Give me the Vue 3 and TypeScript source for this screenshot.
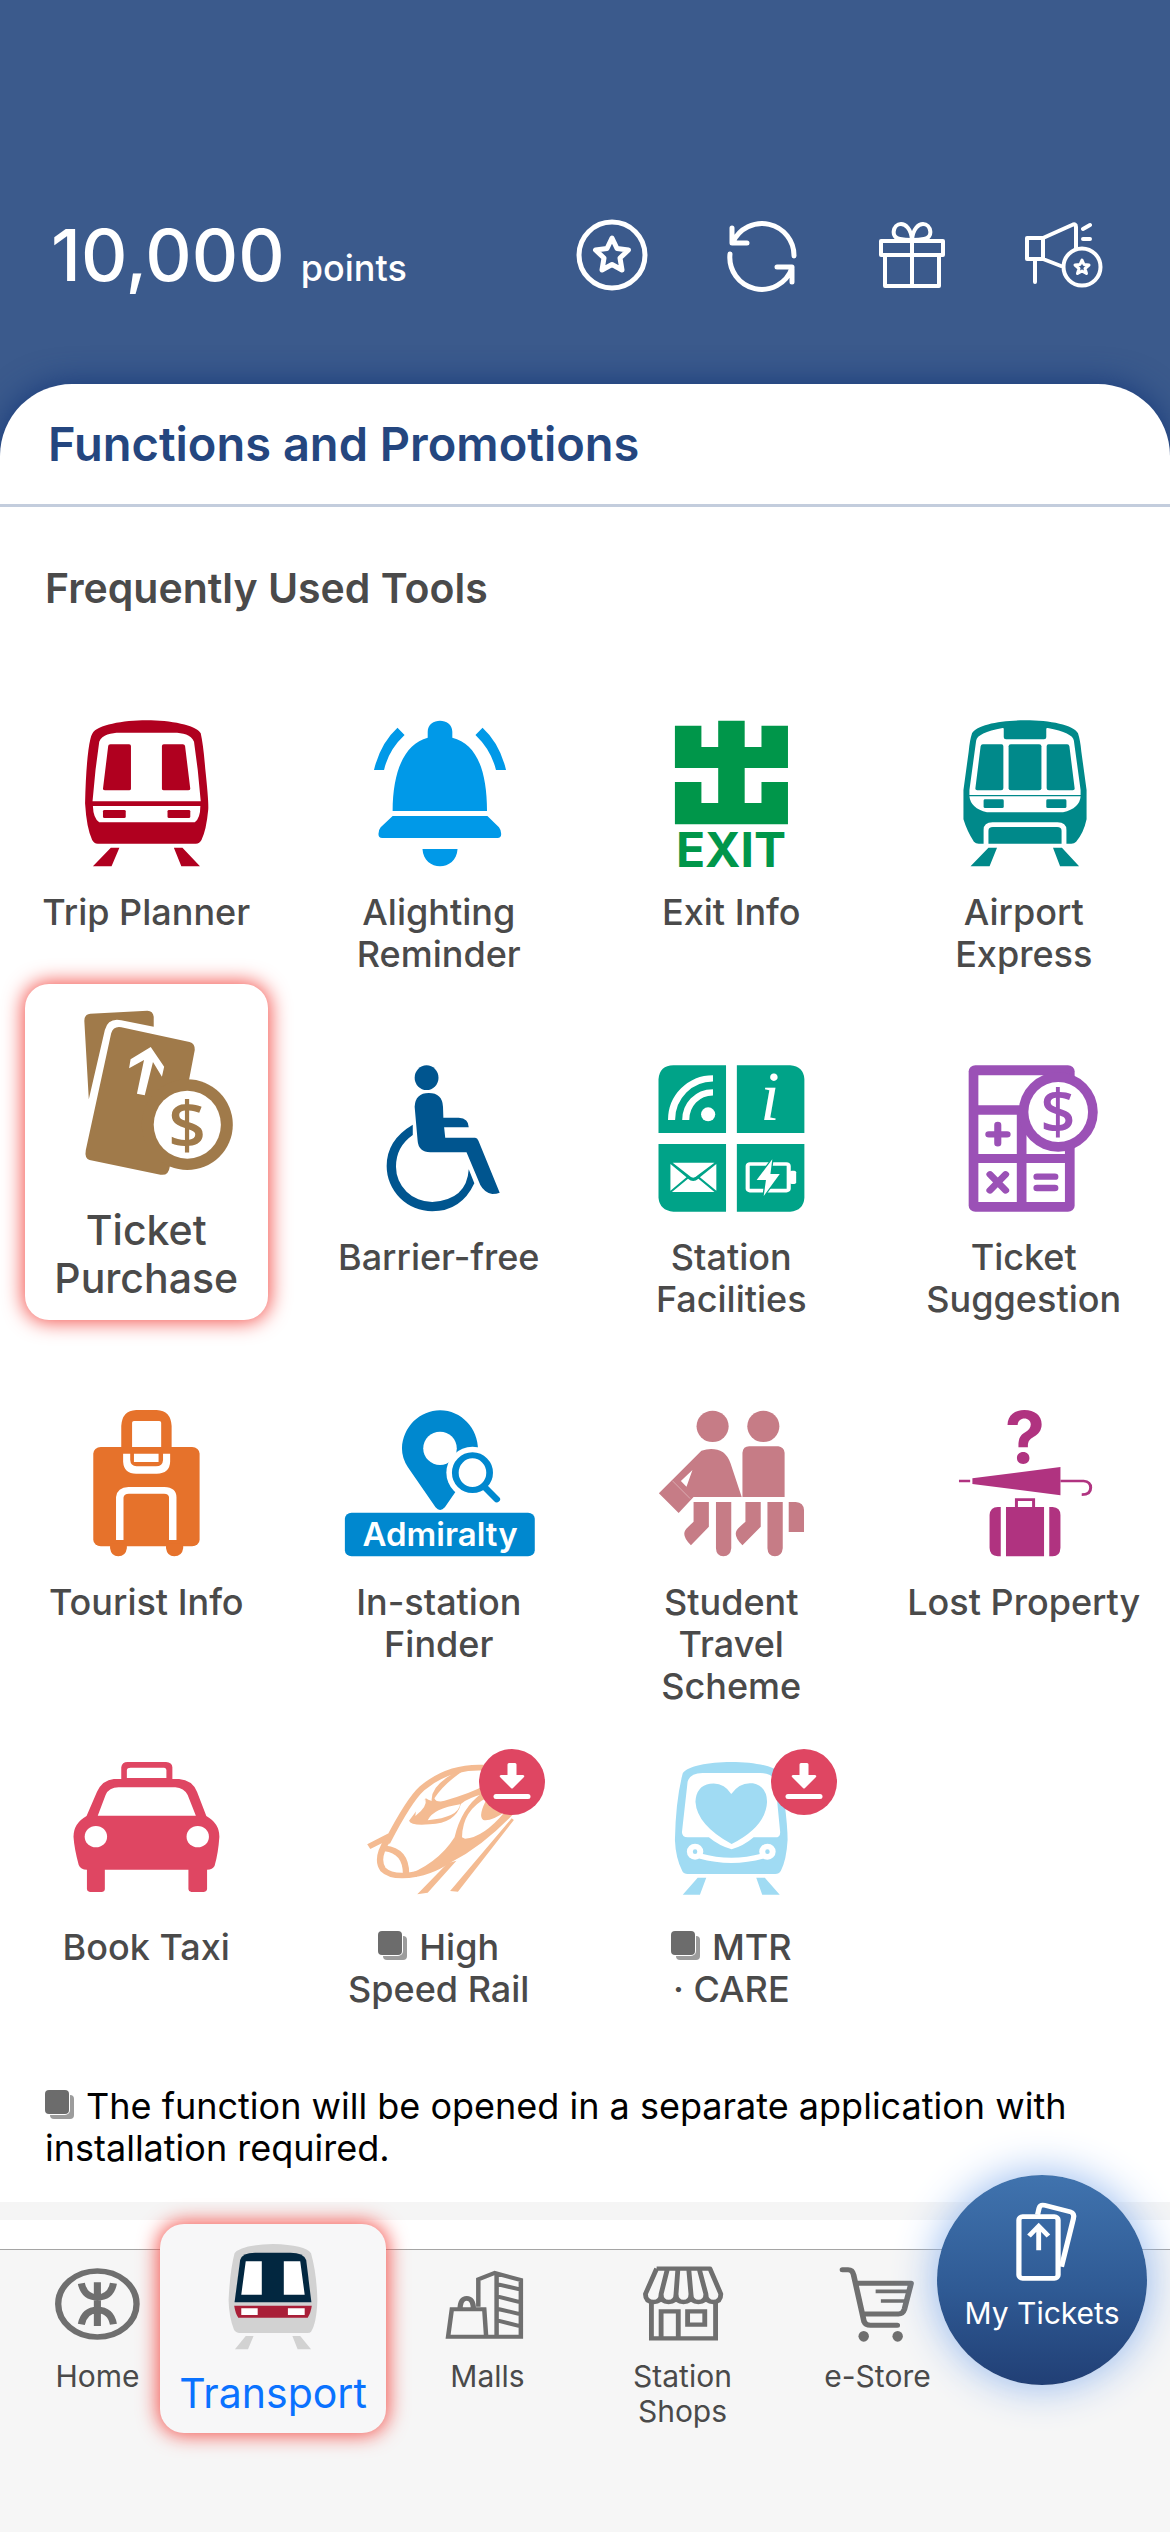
<script setup lang="ts">
interface Tool {
  icon: string
  label: string
  separateApp?: boolean
  highlighted?: boolean
}

interface Tab {
  icon: string
  label: string
  active?: boolean
}

// Icon artwork is authored on a 784-unit-wide artboard per column and mapped to a 292x146 box.
const art = (tx: number, ty: number, body: string): string =>
  `<g transform="matrix(.3731 0 0 .3333 ${tx} ${ty})">${body}</g>`

const downloadBadge = `
  <circle cx="219" cy="27" r="33" fill="#df4662"/>
  <path fill="#fff" d="M214.500 9.500Q214.500 8 216 8H222Q223.500 8 223.500 9.500V20H230Q232 20.500 231 22L220 33Q219 34 218 33L207 22Q206 20.500 208 20H214.500Z"/>
  <path stroke="#fff" stroke-width="5" stroke-linecap="round" d="M203 41.500H235"/>`

const toolIcons: Record<string, string> = {
  trip: art(0, -30, `<g fill="#b0001f">
    <path fill-rule="evenodd" d="M248 130C260 105 330 91 393 91S526 105 538 130Q545 165 550 235Q560 340 558 360Q553 420 540 450Q535 461 525 461H262Q252 461 247 450Q232 415 228 340Q230 240 237 180Q242 140 248 130ZM266 155C273 133 300 128 320 128H466C490 128 512 133 520 155L530 240L538 334H248L256 240ZM249 348H537Q537 385 522 397H266Q250 385 249 348Z"/>
    <path d="M296 163H346Q351 163 351 168V296Q351 301 346 301H282Q276 301 276 296L290 168Q290 163 296 163ZM490 163H439Q434 163 434 168V296Q434 301 439 301H504Q510 301 510 296L496 168Q495 163 490 163Z"/>
    <rect x="276" y="360" width="61" height="24" rx="4"/><rect x="449" y="360" width="61" height="24" rx="4"/>
    <path d="M297 473H320L299 529H249ZM466 473H489L536 529H486Z"/></g>`),
  bell: art(-292.5, -30, `<path fill="#0099e8" d="M1145 143V125C1145 81 1211 81 1211 125V143C1275 160 1304 240 1304 363H1051C1051 240 1085 160 1145 143ZM1051 378H1305L1336 412Q1342 420 1342 432Q1342 444 1332 444H1023Q1013 444 1013 432Q1013 420 1019 412ZM1131 477H1225C1222 546 1134 546 1131 477ZM1064 113L1083 135Q1040 180 1028 240H1001Q1018 160 1064 113ZM1292 113L1273 135Q1315 180 1328 240H1355Q1338 160 1292 113Z"/>`),
  exit: art(0, -30, `<path fill="#00964a" d="M241 107H312V171H357V92H428V171H473V107H544V234H428V339H473V276H544V403H241V276H312V339H357V234H241Z"/>`) +
    `<text x="146" y="147" text-anchor="middle" font-size="48" font-weight="700" fill="#00964a">EXIT</text>`,
  airport: art(-292.5, -30, `<g fill="#00898a">
    <path fill-rule="evenodd" d="M1036 130C1048 105 1110 91 1178 91S1308 105 1320 130Q1326 150 1329 185L1343 300V388Q1335 430 1315 455Q1310 461 1302 461H1289V420Q1289 397 1265 397H1091Q1067 397 1067 420V461H1054Q1046 461 1041 455Q1023 425 1013 388V300L1027 185Q1030 150 1036 130ZM1047 152Q1050 128 1118 114Q1121 113 1121 117V142Q1121 148 1127 148H1229Q1235 148 1235 142V117Q1235 113 1239 114Q1306 128 1309 152L1327 300V315H1029V300ZM1029 319H1327Q1325 355 1280 367H1076Q1032 355 1029 319Z"/>
    <path d="M1065 163H1115Q1120 163 1120 169V295Q1120 301 1114 301H1050Q1044 301 1045 295L1059 169Q1060 163 1065 163ZM1291 163H1241Q1236 163 1236 169V295Q1236 301 1242 301H1306Q1312 301 1311 295L1297 169Q1296 163 1291 163Z"/>
    <rect x="1134" y="163" width="88" height="138" rx="6"/>
    <rect x="1067" y="328" width="54" height="26" rx="4"/><rect x="1235" y="328" width="54" height="26" rx="4"/>
    <path d="M1080 461V422Q1080 411 1092 411H1264Q1276 411 1276 422V461ZM1080 473H1103L1083 529H1032ZM1253 473H1277L1323 529H1272Z"/></g>`),
  purchase: art(-25, -38, `<g fill="#a07a4a">
    <path d="M226 152Q226 133 242 131L395 122Q410 122 412 140V170L325 151Q290 143 281 180L238 388Z"/>
    <path d="M298 190Q304 168 325 172L508 216Q523 221 522 240L507 328L455 590Q452 618 430 614L240 570Q226 565 230 540Z"/>
    <ellipse cx="502" cy="464" rx="122" ry="136"/></g>
    <ellipse cx="502" cy="464" rx="90" ry="102" fill="#fff"/>
    <path fill="#fff" d="M404 231L440 290L434 320L410 276L388 376L367 371L386 270L346 295L350 268Z"/>`) +
    `<text x="162" y="140" text-anchor="middle" font-family="Open Sans, Noto Sans, sans-serif" font-size="66" font-weight="600" fill="#a07a4a">$</text>`,
  barrier: art(-292.5, -95, `<g fill="#00558f"><ellipse cx="1142" cy="323" rx="32" ry="37"/>
    <path d="M1110 410Q1112 369 1148 369Q1184 369 1186 410L1187 443H1228Q1255 445 1255 472H1189L1192 503H1272Q1278 503 1281 512L1338 668Q1330 672 1318 672Q1297 668 1286 645L1249 547H1152Q1120 545 1118 512Z"/>
    <path d="M1105 464V495Q1060 530 1060 590A97 106 0 0 0 1157 696Q1250 690 1255 598L1270 640Q1235 724 1157 724A122 136 0 0 1 1035 588Q1035 510 1105 464Z"/></g>`),
  facilities: art(0, -35, `<path fill="#00a388" d="M197 309V148Q200 106 237 106H378V309ZM407 106H550Q586 110 588 147V309H407ZM197 342H378V545H237Q200 541 197 503ZM407 342H588V503Q586 541 550 545H407Z"/>
    <g fill="none" stroke="#fff" stroke-width="19"><path d="M232 270C232 200 282 145 343 145M270 270C270 225 300 187 343 187"/><rect x="436" y="402" width="110" height="80" rx="6" stroke-width="11"/></g>
    <g fill="#fff"><ellipse cx="330" cy="253" rx="19" ry="21"/><path d="M235 398H347L302 436Q290 450 278 436ZM229 402L272 442L229 482ZM352 402L308 442L352 482ZM233 486L276 446Q290 460 304 446L347 486Z"/><rect x="549" y="422" width="17" height="40" rx="5"/></g>
    <path fill="#fff" stroke="#00a388" stroke-width="7" paint-order="stroke" d="M502 388L460 450H485L479 498L522 432H497Z"/>`) +
    `<text x="185" y="55" text-anchor="middle" font-family="Liberation Serif, serif" font-style="italic" font-size="70" fill="#fff">i</text>`,
  suggestion: art(-292.5, -35, `<g fill="#9b51b6"><rect x="1027" y="106" width="284" height="439" rx="18"/></g>
    <path fill="#fff" d="M1053 136H1285V226H1053ZM1053 254H1156V372H1053ZM1182 254H1285V372H1182ZM1053 399H1156V516H1053ZM1182 399H1285V516H1182Z"/>
    <ellipse cx="1267" cy="246" rx="106" ry="119" fill="#9b51b6"/><ellipse cx="1267" cy="246" rx="80" ry="90" fill="#fff"/>
    <path fill="none" stroke="#9b51b6" stroke-width="19" stroke-linecap="round" d="M1081 313H1130M1105 285V340M1084 433L1126 481M1126 433L1084 481M1210 440H1258M1210 474H1258"/>`) +
    `<text x="180" y="69" text-anchor="middle" font-family="Open Sans, Noto Sans, sans-serif" font-size="61" font-weight="600" fill="#9b51b6">$</text>`,
  tourist: art(0, -30, `<path fill="#e6722b" fill-rule="evenodd" d="M325 210V138Q327 92 365 90H420Q458 92 460 138V210ZM354 128Q354 123 359 123H427Q432 123 432 128V201H354Z"/>
    <rect x="250" y="201" width="285" height="298" rx="20" fill="#e6722b"/>
    <path fill="#e6722b" d="M295 490V505Q298 529 317 529Q337 529 340 505V490ZM445 490V505Q448 529 467 529Q488 529 491 505V490Z"/>
    <path fill="#fff" d="M330 221V245Q332 281 365 281H420Q455 280 456 245V221H437V240Q436 259 418 259H366Q350 258 349 240V221ZM359 221H425V246H359Z"/>
    <path fill="none" stroke="#fff" stroke-width="20" d="M321 480V352Q323 332 345 331H440Q463 332 463 352V480"/>`),
  station: art(-292.5, -30, `<path fill="#0088cf" d="M1178 91C1235 91 1280 145 1280 210Q1280 240 1265 262L1191 382Q1178 398 1166 382L1092 262Q1076 235 1076 205C1078 140 1125 91 1178 91Z"/>
    <ellipse cx="1178" cy="205" rx="45" ry="50" fill="#fff"/><ellipse cx="1265" cy="278" rx="70" ry="78" fill="#fff"/>
    <ellipse cx="1265" cy="278" rx="46" ry="52" fill="none" stroke="#0088cf" stroke-width="18"/><path stroke="#0088cf" stroke-width="18" stroke-linecap="round" d="M1298 322L1330 358"/>
    <rect x="923" y="398" width="509" height="131" rx="18" fill="#0088cf"/>`) +
    `<text x="147" y="136" text-anchor="middle" font-size="33" font-weight="600" fill="#fff">Admiralty</text>`,
  student: art(0, -30, `<g fill="#c67c86"><ellipse cx="342" cy="139" rx="43" ry="47"/><ellipse cx="478" cy="139" rx="43" ry="47"/>
    <path fill-rule="evenodd" d="M312 212Q345 200 370 217Q383 228 390 250L420 351H291L251 399L198 340ZM288 270L257 303L272 320Z"/>
    <path d="M422 351V218Q424 199 440 199H518Q533 201 535 218V351ZM291 366H332V440L284 496Q252 462 277 440L291 425ZM351 366H392V505Q390 529 371 529Q352 529 351 505ZM430 366H471V440L422 496Q390 462 415 440L430 425ZM489 366H530V505Q528 529 509 529Q490 529 489 505ZM546 366H565Q586 368 587 390V456H546Z"/></g>
    <path stroke="#e3bdc2" stroke-width="2" d="M234 302L282 356"/>`),
  lost: art(-292.5, -30, `<path fill="#b03380" d="M1037 295L1273 261V346L1037 312ZM1113 381V529H1105Q1083 527 1083 503V405Q1085 381 1105 381ZM1127 381H1229V529H1127ZM1243 381H1252Q1273 383 1273 405V503Q1272 529 1252 529H1243Z"/>
    <path fill="none" stroke="#b03380" stroke-width="8" d="M1001 303H1031M1273 303H1335Q1354 305 1354 323Q1354 344 1330 344M1155 383V359H1201V383"/>`) +
    `<text x="147" y="53" text-anchor="middle" font-size="72" font-weight="700" fill="#b03380">?</text>`,
  taxi: art(0, -25, `<path fill="#df4662" fill-rule="evenodd" d="M325 147V112Q327 96 342 96H445Q461 97 462 112V147H480Q515 150 528 185L553 258Q588 280 588 320Q585 370 575 408Q570 419 555 419V478Q553 486 545 486H513Q505 484 505 478V419H281V478Q280 486 272 486H241Q233 484 233 478V419Q216 419 211 405Q199 355 197 320Q197 280 232 258L260 185Q275 150 305 147ZM340 120Q341 113 350 113H440Q446 114 446 120V144H340ZM262 257L283 195Q292 172 318 172H470Q493 174 503 195L525 257Z"/>
    <ellipse cx="257" cy="320" rx="30" ry="32" fill="#fff"/><ellipse cx="530" cy="320" rx="30" ry="32" fill="#fff"/>`),
  rail: art(-292.5, -25, `<g fill="none" stroke="#f4bb92" stroke-width="17"><path d="M1036 338Q1095 210 1130 175Q1200 108 1295 113M1037 330Q1005 385 1025 418Q1050 446 1115 432M1030 355Q1088 362 1087 434M987 350L1047 316"/></g>
    <g fill="#f4bb92"><path d="M1095 272L1140 205Q1160 220 1190 212Q1260 190 1300 165V190Q1250 205 1234 222Q1220 280 1150 283Q1100 288 1095 272Z"/>
    <path d="M1156 216Q1150 170 1215 130L1240 122Q1185 165 1163 205Q1165 214 1180 216Z"/>
    <path d="M1075 441Q1170 405 1217 322Q1235 235 1290 190L1340 215L1372 255Q1290 350 1210 395Q1140 448 1075 441Z"/>
    <path d="M1117 493L1198 400L1222 392L1145 488ZM1205 483L1370 265L1376 270L1226 485Z"/></g>
    <path fill="#fff" d="M1145 271Q1160 235 1232 223Q1228 262 1145 271ZM1112 258Q1112 225 1139 208Q1145 230 1112 258ZM1237 322Q1238 240 1306 202Q1278 258 1294 270Q1315 275 1352 245Q1295 322 1245 326Z"/>`) + downloadBadge,
  care: art(0, -25, `<path fill="#a0dbf3" fill-rule="evenodd" d="M262 130C275 108 330 96 392 96S508 108 522 130Q530 170 535 220Q543 290 543 330Q540 390 525 422Q520 432 510 432H275Q265 432 261 424Q243 385 241 330Q243 210 262 130ZM275 155Q282 129 315 129H470Q503 130 510 155L523 305Q524 322 510 322H452Q425 348 393 358Q360 348 332 322H275Q259 322 260 305Z"/>
    <path fill="#a0dbf3" d="M392 192Q415 155 450 160Q487 168 488 215Q485 290 393 342Q300 285 296 215Q298 168 335 161Q372 155 392 192ZM302 443H325L308 494H262ZM459 443H482L522 494H475Z"/>
    <path fill="none" stroke="#fff" stroke-width="16" d="M308 378Q392 404 477 378"/>
    <g fill="#fff"><ellipse cx="295" cy="365" rx="22" ry="24"/><ellipse cx="489" cy="365" rx="22" ry="24"/></g>
    <g fill="#a0dbf3"><ellipse cx="295" cy="365" rx="6" ry="7"/><ellipse cx="489" cy="365" rx="6" ry="7"/></g>`) + downloadBadge,
}

const tabIcons: Record<string, string> = {
  home: art(0, -102, `<g fill="none" stroke="#6f6f6f" stroke-width="17"><ellipse cx="261" cy="432" rx="105" ry="99"/><path stroke-width="19" d="M218 370Q226 412 261 412Q297 412 304 370M218 493Q226 450 261 450Q297 450 304 493M261 367V498"/></g>`),
  transport: art(-160.5, -81, `<path fill="#d2d2d2" d="M630 280Q645 255 733 252Q820 255 835 280Q850 340 852 420Q850 490 835 515Q833 519 825 519H642Q632 518 628 508Q615 470 614 420Q618 330 630 280ZM660 528H681L666 568H631ZM785 528H806L835 568H799Z"/>
    <path fill="#022740" d="M645 300Q650 278 685 278H780Q815 278 822 300L836 427H630Z"/><path fill="#a91f38" d="M629 437H837Q834 460 826 473H640Q632 460 629 437Z"/>
    <path fill="#fff" d="M660 304H703V404H648ZM762 304H806L818 404H762ZM648 445H692V465H648ZM773 445H818V465H773Z"/>`),
  malls: art(-390, -102, `<g fill="none" stroke="#6f6f6f" stroke-width="12"><path d="M1282 440V358L1326 339L1396 360V530H1201L1211 448H1298L1303 530M1331 342V530M1335 373L1396 389M1335 410L1396 427M1335 447L1396 463M1335 482L1396 499"/><path stroke-width="14" d="M1233 450Q1233 415 1251 415Q1269 415 1269 450"/></g>`),
  shops: art(0, -122, `<g fill="none" stroke="#6f6f6f" stroke-width="13"><path stroke-linejoin="round" d="M192 386H335L364 462Q364 486 344 486Q324 486 324 462L306 386M324 462Q324 486 304 486Q284 486 284 462L278 386M284 462Q284 486 264 486Q244 486 244 462L249 386M244 462Q244 486 224 486Q204 486 204 462L221 386M204 462Q204 486 184 486Q162 486 162 462L192 386"/><path d="M178 486V595H350V486M204 595V514H250V595M275 514H321V554H275Z"/></g>`),
  store: art(-195, -122, `<g fill="none" stroke="#6f6f6f" stroke-width="15" stroke-linecap="round" stroke-linejoin="round"><path d="M690 389H705Q717 389 720 405L748 545Q752 556 765 556H837M729 430H874L856 508Q852 522 840 522H745"/><path stroke-width="11" stroke-linecap="butt" d="M779 454H868M793 483H862"/></g><g fill="#6f6f6f"><ellipse cx="747" cy="589" rx="14" ry="16"/><ellipse cx="838" cy="589" rx="14" ry="16"/></g>`),
}

const ticketsIcon = art(-352, -61, `<g fill="none" stroke="#fff" stroke-width="14" stroke-linejoin="round"><rect x="1163" y="230" width="105" height="185" rx="10"/><path d="M1213 224L1217 205Q1220 193 1232 196L1300 215Q1313 220 1309 236L1277 380"/><path stroke-width="13" stroke-linejoin="miter" d="M1216 262V331M1190 288L1216 258L1242 288"/></g>`)

const actions = [
  { name: 'Rewards', icon: '<circle cx="39" cy="39" r="33"/><path d="M39 22L44 32.500L55.500 34L47 42L49 54L39 48.500L29 54L31 42L22.500 34L34 32.500Z"/>' },
  { name: 'Refresh', icon: '<path d="M9 12V27H24M10 26A32 32 0 0 1 71 40M7 38A32 32 0 0 0 69 52M54 51H69V66"/>' },
  { name: 'Gifts', icon: '<g stroke-width="4"><path d="M8 25H70V39H8ZM12 39V70H66V39M39 25V70M39 24C38 12 32 8 28 8C20 8 17 22 27 23C32 24 36 24 39 24C40 12 46 8 50 8C58 8 61 22 51 23C46 24 42 24 39 24"/></g>' },
  { name: 'Promotions', icon: '<g stroke-width="4"><path d="M4 22H20V43H4ZM20 22L49 9Q53 7 53 11V32M20 43L38 50M12 44V66M60 13L67 9M60 23H67"/><circle cx="59" cy="51" r="18.500"/><path stroke-width="3" d="M59 44L61 48.500L66 49L62 52.500L63.500 57.500L59 55L54.500 57.500L56 52.500L52 49L57 48.500Z"/></g>' },
]

const tools: Tool[] = [
  { icon: 'trip', label: 'Trip Planner' },
  { icon: 'bell', label: 'Alighting\nReminder' },
  { icon: 'exit', label: 'Exit Info' },
  { icon: 'airport', label: 'Airport\nExpress' },
  { icon: 'purchase', label: 'Ticket\nPurchase', highlighted: true },
  { icon: 'barrier', label: 'Barrier-free' },
  { icon: 'facilities', label: 'Station\nFacilities' },
  { icon: 'suggestion', label: 'Ticket\nSuggestion' },
  { icon: 'tourist', label: 'Tourist Info' },
  { icon: 'station', label: 'In-station\nFinder' },
  { icon: 'student', label: 'Student\nTravel\nScheme' },
  { icon: 'lost', label: 'Lost Property' },
  { icon: 'taxi', label: 'Book Taxi' },
  { icon: 'rail', label: 'High\nSpeed Rail', separateApp: true },
  { icon: 'care', label: 'MTR\n· CARE', separateApp: true },
]

const tabs: Tab[] = [
  { icon: 'home', label: 'Home' },
  { icon: 'transport', label: 'Transport', active: true },
  { icon: 'malls', label: 'Malls' },
  { icon: 'shops', label: 'Station\nShops' },
  { icon: 'store', label: 'e-Store' },
]
</script>

<template>
  <div class="page">
    <header class="top">
      <p class="points"><strong>10,000</strong> <span>points</span></p>
      <div class="actions">
        <button v-for="action in actions" :key="action.name" type="button" :aria-label="action.name">
          <svg viewBox="0 0 78 78" aria-hidden="true" v-html="action.icon" />
        </button>
      </div>
    </header>

    <main class="sheet">
      <h1>Functions and Promotions</h1>
      <section class="tools">
        <h2>Frequently Used Tools</h2>
        <div class="grid">
          <a v-for="tool in tools" :key="tool.icon" href="#" class="tool" :class="{ highlighted: tool.highlighted }">
            <svg
              class="tool-icon"
              :viewBox="tool.highlighted ? '0 0 242 170' : '0 0 292 146'"
              v-html="toolIcons[tool.icon]"
            />
            <span class="label"><svg v-if="tool.separateApp" class="stack" viewBox="0 0 29 29" aria-hidden="true"><rect x="5" y="5" width="24" height="24" rx="4" fill="#9c9c9c" /><rect width="24" height="24" rx="4" fill="#6c6c6c" stroke="#fff" stroke-width="2" paint-order="stroke" /></svg>{{ tool.label }}</span>
          </a>
        </div>
        <p class="note"><svg class="stack" viewBox="0 0 29 29" aria-hidden="true"><rect x="5" y="5" width="24" height="24" rx="4" fill="#9c9c9c" /><rect width="24" height="24" rx="4" fill="#6c6c6c" stroke="#fff" stroke-width="2" paint-order="stroke" /></svg>The function will be opened in a separate application with installation required.</p>
      </section>
      <div class="band"></div>
    </main>

    <nav class="tabs">
      <a v-for="tab in tabs" :key="tab.icon" href="#" class="tab" :class="{ active: tab.active }">
        <svg class="tab-icon" :viewBox="tab.active ? '0 0 226 110' : '0 0 195 84'" aria-hidden="true" v-html="tabIcons[tab.icon]" />
        <span>{{ tab.label }}</span>
      </a>
      <button type="button" class="tickets">
        <svg viewBox="0 0 210 82" aria-hidden="true" v-html="ticketsIcon" />
        <span>My Tickets</span>
      </button>
    </nav>
  </div>
</template>

<style>
body {
  background: #f6f6f6;
}
</style>

<style scoped>
.page {
  display: flex;
  flex-direction: column;
  min-height: 100vh;
  overflow: hidden;
  background: #3b5a8c;
  font-family: Inter, "Liberation Sans", sans-serif;
}

button {
  padding: 0;
  border: 0;
  background: none;
  font-family: inherit;
}

a {
  color: inherit;
  text-decoration: none;
}

.top {
  display: flex;
  justify-content: space-between;
  padding: 216px 69px 90px 51px;
  color: #fff;
}

.points {
  display: flex;
  align-items: baseline;
  gap: 16px;
  margin: 0;
  font-size: 36px;
  font-weight: 500;
  line-height: 42px;
}

.points strong {
  font-size: 72px;
  font-weight: 500;
  line-height: 78px;
}

.actions {
  display: flex;
  gap: 72px;
}

.actions button,
.actions svg {
  display: block;
  width: 78px;
  height: 78px;
}

.actions svg {
  overflow: visible;
  fill: none;
  stroke: #fff;
  stroke-width: 5;
  stroke-linecap: round;
  stroke-linejoin: round;
}

.sheet {
  flex: 1;
  border-radius: 72px 72px 0 0;
  background: #fff;
  box-shadow: 0 0 32px #17397a;
}

h1 {
  margin: 0;
  padding: 0 48px;
  border-bottom: 3px solid #c3cddd;
  color: #24467f;
  font-size: 47px;
  font-weight: 600;
  line-height: 120px;
}

.tools {
  padding: 57px 0 33px;
}

h2 {
  margin: 0;
  padding: 0 45px;
  color: #4a4a4a;
  font-size: 41px;
  font-weight: 600;
  line-height: 48px;
}

.grid {
  display: grid;
  grid-template-columns: repeat(4, 1fr);
  grid-auto-rows: minmax(297px, auto);
  row-gap: 48px;
  margin-top: 108px;
}

.tool {
  display: flex;
  flex-direction: column;
  align-items: center;
  color: #4a4a4a;
  text-align: center;
}

.tool-icon {
  width: 292px;
  height: 146px;
  overflow: visible;
}

.label {
  margin-top: 25px;
  font-size: 36px;
  font-weight: 500;
  line-height: 42px;
  white-space: pre-line;
}

.highlighted {
  margin: -81px 25px 42px;
  padding-top: 24px;
  border-radius: 24px;
  background: #fff;
  box-shadow: 0 0 20px 2px #f4504a;
}

.highlighted .tool-icon {
  width: 242px;
  height: 170px;
}

.highlighted .label {
  margin-top: 28px;
  font-size: 41px;
  line-height: 48px;
}

.stack {
  width: 29px;
  height: 29px;
  margin-right: 12px;
}

.note {
  margin: 33px 45px 0;
  color: #000;
  font-size: 36px;
  line-height: 42px;
}

.band {
  height: 18px;
  margin-bottom: 29px;
  background: #f5f5f5;
}

.tabs {
  position: relative;
  display: grid;
  grid-template-columns: repeat(6, 1fr);
  height: 282px;
  border-top: 1px solid #a5a5a5;
  background: #f6f6f6;
}

.tab {
  display: flex;
  flex-direction: column;
  align-items: center;
  gap: 13px;
  padding-top: 12px;
  color: #4a4a4a;
  font-size: 30px;
  line-height: 35px;
  text-align: center;
  white-space: pre-line;
}

.tab-icon {
  width: 195px;
  height: 84px;
}

.active {
  gap: 18px;
  height: 192px;
  margin: -26px 4px 0 -35px;
  padding-top: 17px;
  border-radius: 24px;
  background: #f7f7f8;
  box-shadow: 0 0 20px 2px #f4504a;
  color: #0a72ff;
  font-size: 41px;
  line-height: 48px;
}

.active .tab-icon {
  width: 226px;
  height: 110px;
}

.tickets {
  position: absolute;
  top: -75px;
  right: 23px;
  display: flex;
  flex-direction: column;
  align-items: center;
  gap: 13px;
  width: 210px;
  height: 210px;
  padding-top: 26px;
  border-radius: 50%;
  background: linear-gradient(#4073ae, #2f5a94 55%, #213f75);
  box-shadow: 0 0 44px #8db4ee;
  color: #fff;
  font-size: 30px;
  line-height: 35px;
}

.tickets svg {
  width: 210px;
  height: 82px;
}
</style>
